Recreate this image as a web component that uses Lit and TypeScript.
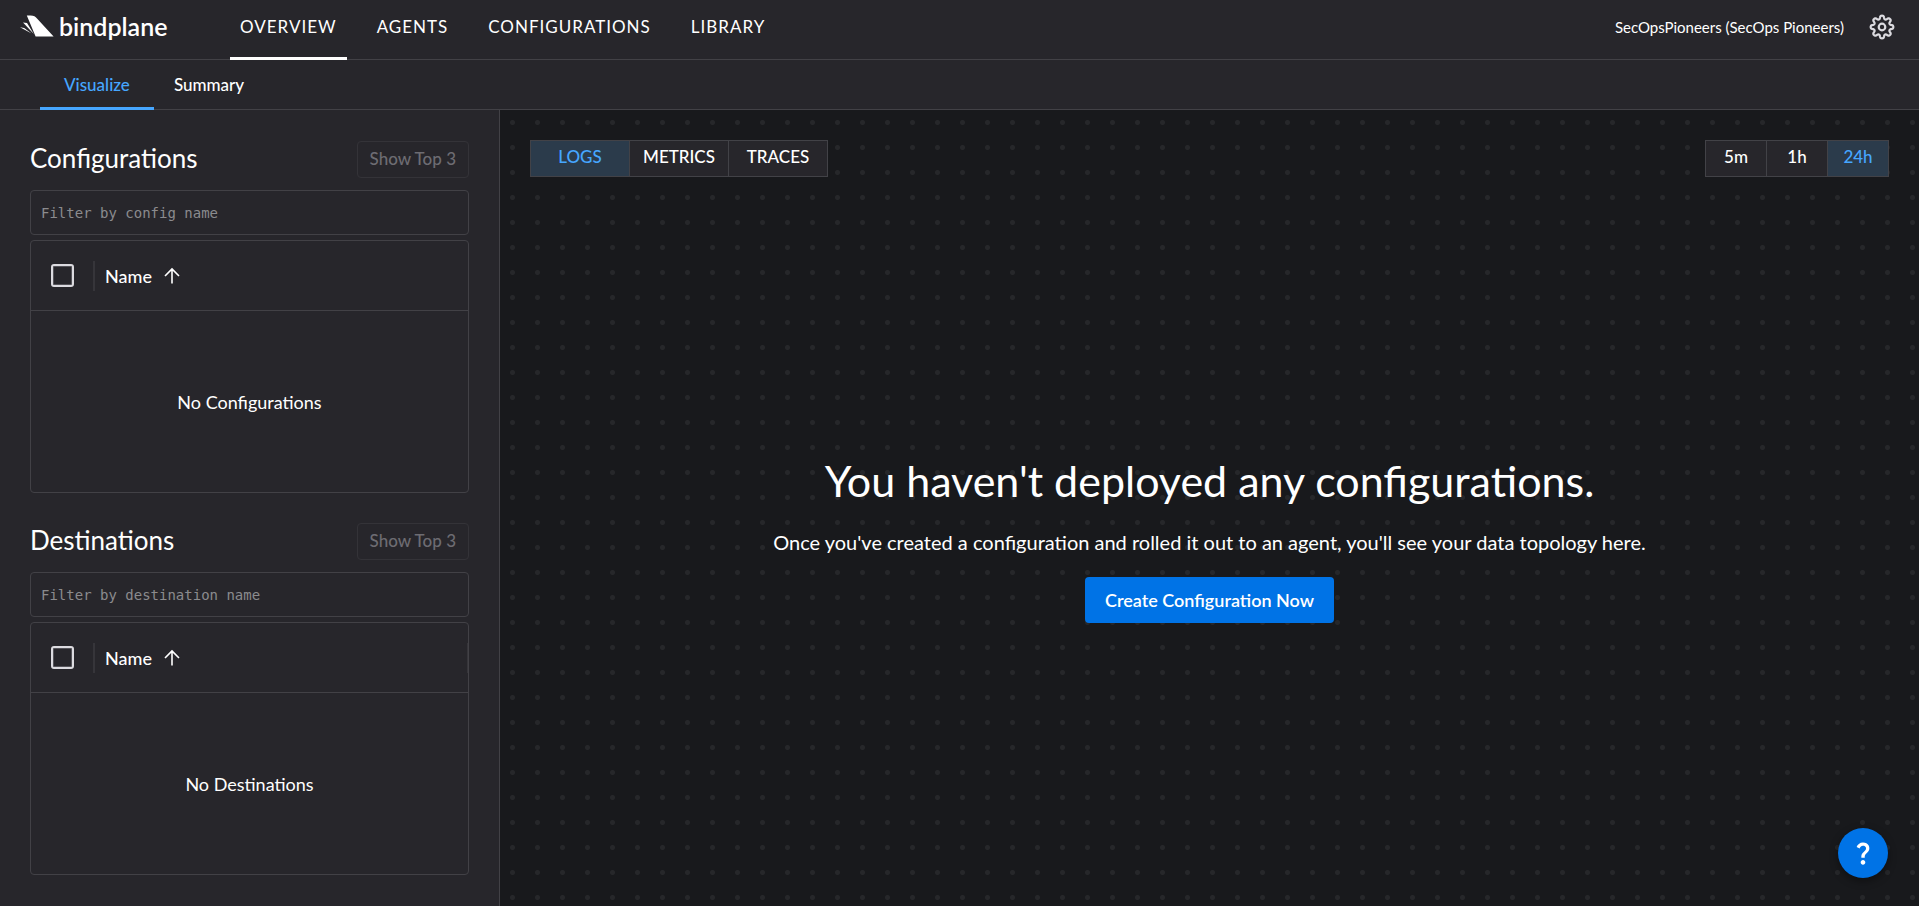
import { LitElement, html, css } from "lit";
import { customElement, property, state } from "lit/decorators.js";
import { classMap } from "lit/directives/class-map.js";

const gearPath = (() => {
  const points: string[] = [];
  const steps = 160;
  for (let i = 0; i < steps; i++) {
    const angle = (i / steps) * Math.PI * 2;
    const radius = 9.7 + 1.7 * Math.tanh(1.6 * (Math.cos(8 * angle) + 0.1));
    points.push(
      `${(13 + radius * Math.sin(angle)).toFixed(2)} ${(13 - radius * Math.cos(angle)).toFixed(2)}`
    );
  }
  return `M${points.join("L")}Z`;
})();

@customElement("toggle-group")
class ToggleGroup extends LitElement {
  @property({ attribute: false }) options: string[] = [];
  @property() selected = "";
  @property() label = "";
  @property({ type: Boolean }) compact = false;

  static styles = css`
    .group {
      display: flex;
    }
    .option {
      box-sizing: border-box;
      min-width: 100px;
      height: 37px;
      margin: 0;
      padding: 0 10px 4px;
      border: 1px solid #424247;
      background: #27262b;
      color: #fff;
      font: 500 17px/20px Lato, sans-serif;
      cursor: pointer;
    }
    .compact .option {
      min-width: 62px;
    }
    .option + .option {
      margin-left: -1px;
    }
    .option.on {
      background: #2b3b4b;
      color: #46a6ff;
    }
  `;

  render() {
    return html`<div
      class=${classMap({ group: true, compact: this.compact })}
      role="group"
      aria-label=${this.label}
    >
      ${this.options.map(
        (option) => html`<button
          class=${classMap({ option: true, on: option === this.selected })}
          aria-pressed=${option === this.selected}
          @click=${() => (this.selected = option)}
        >
          ${option}
        </button>`
      )}
    </div>`;
  }
}

@customElement("filter-panel")
class FilterPanel extends LitElement {
  @property() heading = "";
  @property() placeholder = "";
  @property({ type: Boolean }) divided = false;

  static styles = css`
    :host {
      display: block;
    }
    .head {
      display: flex;
      justify-content: space-between;
      align-items: flex-start;
      margin-bottom: 12px;
    }
    .title {
      margin: 0;
      font-size: 26px;
      line-height: 34px;
      font-weight: 400;
    }
    .top {
      box-sizing: border-box;
      height: 37px;
      padding: 0 12px 2px;
      border: 1px solid #343338;
      border-radius: 4px;
      background: none;
      color: #6d6c72;
      font: 500 17px/20px Lato, sans-serif;
    }
    .filter {
      display: block;
      box-sizing: border-box;
      width: 100%;
      height: 45px;
      margin-bottom: 5px;
      padding: 0 10px;
      border: 1px solid #424146;
      border-radius: 4px;
      background: none;
      color: #fff;
      font: 14px/20px "DejaVu Sans Mono", monospace;
    }
    .filter::placeholder {
      color: #8b8b8e;
      opacity: 1;
    }
    .grid {
      width: 100%;
      border: 1px solid #424146;
      border-radius: 4px;
      border-spacing: 0;
      font-size: 18px;
      line-height: 24px;
    }
    .grid th {
      height: 69px;
      padding: 0;
      border-bottom: 1px solid #424146;
      font-weight: 500;
      text-align: left;
    }
    .check-cell {
      width: 64px;
    }
    .cell {
      display: flex;
      align-items: center;
      height: 30px;
    }
    .check-cell .cell {
      padding-left: 20px;
      border-right: 2px solid #36353a;
    }
    .divided {
      border-right: 1px solid #36353a;
    }
    .check {
      appearance: none;
      box-sizing: border-box;
      width: 23px;
      height: 23px;
      margin: 0;
      border: 2px solid #dcdbe0;
      border-radius: 3px;
      box-shadow: inset 0 0 0 1px #55545a;
    }
    .check:checked {
      background: #46a6ff;
    }
    .sort {
      display: flex;
      align-items: center;
      gap: 10px;
      padding: 0 10px;
      border: 0;
      background: none;
      color: inherit;
      font: inherit;
    }
    .arrow {
      width: 20px;
      height: 20px;
    }
    .empty {
      height: 181px;
      padding: 0;
      text-align: center;
    }
  `;

  render() {
    return html`
      <div class="head">
        <h2 class="title">${this.heading}</h2>
        <button class="top" disabled>Show Top 3</button>
      </div>
      <input
        class="filter"
        type="text"
        placeholder=${this.placeholder}
        aria-label=${this.placeholder}
      />
      <table class="grid">
        <thead>
          <tr>
            <th class="check-cell">
              <div class="cell">
                <input class="check" type="checkbox" aria-label="Select all rows" />
              </div>
            </th>
            <th>
              <div class=${classMap({ cell: true, divided: this.divided })}>
                <button class="sort">
                  Name
                  <svg class="arrow" viewBox="0 0 20 20" fill="none" stroke="#fff" stroke-width="1.6">
                    <path d="M10 17.5V3.2M3 10l7-7 7 7" />
                  </svg>
                </button>
              </div>
            </th>
          </tr>
        </thead>
        <tbody>
          <tr>
            <td class="empty" colspan="2">No ${this.heading}</td>
          </tr>
        </tbody>
      </table>
    `;
  }
}

@customElement("app-root")
class AppRoot extends LitElement {
  @state() private section = "OVERVIEW";
  @state() private tab = "Visualize";

  static styles = css`
    :host {
      display: flex;
      flex-direction: column;
      min-height: 100vh;
      background: #27262b;
      color: #fff;
      font-family: Lato, sans-serif;
    }
    .bar {
      box-sizing: border-box;
      display: flex;
      align-items: center;
      height: 60px;
      padding: 0 24px 0 20px;
      border-bottom: 1px solid #424146;
    }
    .brand {
      display: flex;
      align-items: center;
      gap: 5px;
      width: 210px;
      padding-bottom: 8px;
      color: #fff;
      font-size: 25px;
      line-height: 30px;
      font-weight: 600;
      text-decoration: none;
    }
    .wing {
      width: 34px;
      height: 22px;
    }
    .nav,
    .tabs {
      display: flex;
    }
    .nav {
      gap: 20px;
      align-self: stretch;
      flex: 1;
      margin-bottom: -1px;
    }
    .link,
    .tab {
      box-sizing: border-box;
      border-bottom: 3px solid transparent;
      color: #fff;
      font-size: 17px;
      line-height: 20px;
      text-decoration: none;
    }
    .link {
      padding: 17px 10px 0;
      letter-spacing: 1px;
    }
    .link.on {
      border-color: #fff;
    }
    .account {
      margin-right: 25px;
      padding-bottom: 6px;
      font-size: 15px;
      line-height: 20px;
    }
    .settings {
      display: flex;
      padding: 0 0 5px;
      border: 0;
      background: none;
    }
    .gear {
      width: 26px;
      height: 26px;
    }
    .tabs {
      box-sizing: border-box;
      height: 50px;
      padding-left: 40px;
      border-bottom: 1px solid #424146;
    }
    .tab {
      height: 50px;
      padding: 15px 24px 0;
      font-weight: 500;
    }
    .tab + .tab {
      padding-left: 20px;
    }
    .tab.on {
      border-color: #46a6ff;
      color: #46a6ff;
    }
    .body {
      flex: 1;
      display: flex;
    }
    .side {
      box-sizing: border-box;
      width: 500px;
      display: flex;
      flex-direction: column;
      gap: 30px;
      padding: 31px 30px 30px;
      border-right: 1px solid #424146;
    }
    .canvas {
      flex: 1;
      display: flex;
      flex-direction: column;
      padding: 30px;
      background: radial-gradient(circle, #26272a 2px, #18191c 3px) 0 0 / 25px 25px;
    }
    .tools {
      display: flex;
      justify-content: space-between;
    }
    .hero {
      flex: 1;
      display: flex;
      flex-direction: column;
      align-items: center;
      justify-content: center;
      padding-top: 24px;
      text-align: center;
    }
    .hero-title {
      margin: 0 0 20px;
      font-size: 43px;
      line-height: 52px;
      font-weight: 400;
    }
    .hero-text {
      margin: 0 0 20px;
      font-size: 20px;
      line-height: 30px;
    }
    .create {
      height: 46px;
      padding: 0 20px;
      border: 0;
      border-radius: 4px;
      background: #0073e6;
      color: #fff;
      font: 600 18px/24px Lato, sans-serif;
    }
    .help {
      position: fixed;
      right: 31px;
      bottom: 28px;
      display: flex;
      align-items: center;
      justify-content: center;
      width: 50px;
      height: 50px;
      padding: 0;
      border: 0;
      border-radius: 50%;
      background: #0073e6;
      box-shadow: 0 3px 8px rgba(0, 0, 0, 0.4);
    }
    .mark {
      width: 28px;
      height: 28px;
    }
  `;

  render() {
    return html`
      <header class="bar">
        <a class="brand" href="#">
          <svg class="wing" viewBox="0 0 34 22" fill="#fff" aria-hidden="true">
            <path d="M6.8 .4H10.5C14 .4 15.4 1.6 17 3.6L33.600 21.500H15.600Z" />
            <path d="M3 7.400L7 8.100L13.800 19Z" />
            <path d="M0 12.200L4.200 12.900L11.600 18.600Z" />
          </svg>
          bindplane
        </a>
        <nav class="nav">
          ${["OVERVIEW", "AGENTS", "CONFIGURATIONS", "LIBRARY"].map(
            (name) => html`<a
              class=${classMap({ link: true, on: name === this.section })}
              href="#"
              @click=${() => (this.section = name)}
              >${name}</a
            >`
          )}
        </nav>
        <span class="account">SecOpsPioneers (SecOps Pioneers)</span>
        <button class="settings" aria-label="Settings">
          <svg class="gear" viewBox="0 0 26 26" fill="none" stroke="#dcdbe0" stroke-width="2.2" stroke-linejoin="round">
            <path d=${gearPath} />
            <circle cx="13" cy="13" r="3.3" />
          </svg>
        </button>
      </header>
      <nav class="tabs">
        ${["Visualize", "Summary"].map(
          (name) => html`<a
            class=${classMap({ tab: true, on: name === this.tab })}
            href="#"
            @click=${() => (this.tab = name)}
            >${name}</a
          >`
        )}
      </nav>
      <div class="body">
        <aside class="side">
          <filter-panel heading="Configurations" placeholder="Filter by config name"></filter-panel>
          <filter-panel
            heading="Destinations"
            placeholder="Filter by destination name"
            divided
          ></filter-panel>
        </aside>
        <main class="canvas">
          <div class="tools">
            <toggle-group
              label="Telemetry type"
              selected="LOGS"
              .options=${["LOGS", "METRICS", "TRACES"]}
            ></toggle-group>
            <toggle-group
              label="Period"
              selected="24h"
              compact
              .options=${["5m", "1h", "24h"]}
            ></toggle-group>
          </div>
          <section class="hero">
            <h1 class="hero-title">You haven't deployed any configurations.</h1>
            <p class="hero-text">
              Once you've created a configuration and rolled it out to an agent, you'll see your
              data topology here.
            </p>
            <button class="create">Create Configuration Now</button>
          </section>
        </main>
      </div>
      <button class="help" aria-label="Help">
        <svg class="mark" viewBox="0 0 24 24" fill="#fff">
          <path
            d="M11.07 12.85c.77-1.39 2.25-2.21 3.11-3.44.91-1.29.4-3.7-2.18-3.7-1.69 0-2.52 1.28-2.87 2.34L6.54 6.96C7.25 4.83 9.18 3 11.99 3c2.35 0 3.96 1.07 4.78 2.41.7 1.15 1.11 3.3.03 4.9-1.2 1.77-2.35 2.31-2.97 3.45-.25.46-.35.76-.35 2.24h-2.89c-.01-.78-.13-2.05.48-3.15zM14 20c0 1.1-.9 2-2 2s-2-.9-2-2 .9-2 2-2 2 .9 2 2z"
          />
        </svg>
      </button>
    `;
  }
}
